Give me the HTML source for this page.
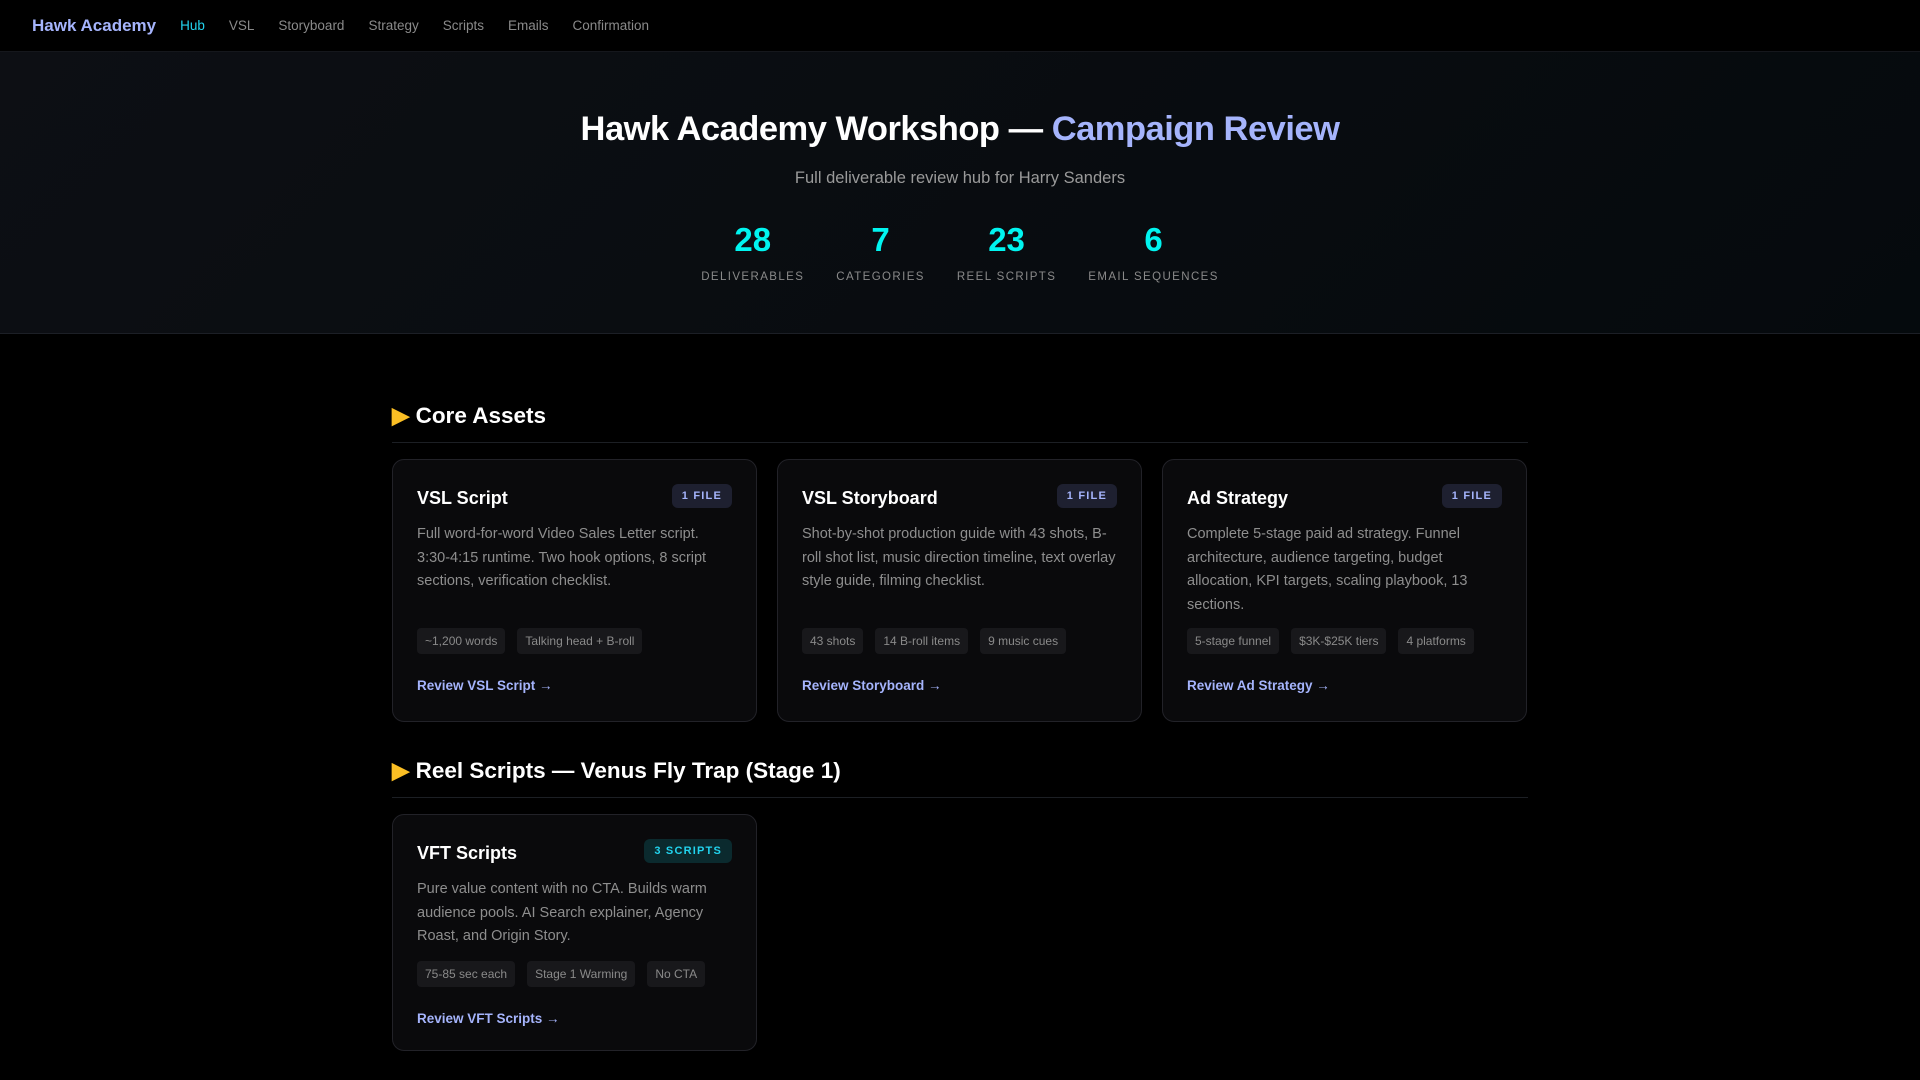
<!DOCTYPE html>
<html><head><meta charset="utf-8"><style>
*{margin:0;padding:0;box-sizing:border-box}
body{width:1920px;height:1080px;background:#000;font-family:"Liberation Sans",sans-serif;color:#fff;overflow:hidden}
nav{height:52px;border-bottom:1px solid #15171c;display:flex;align-items:center;padding-left:32px}
.logo{font-size:17px;font-weight:bold;color:#a5b4fc;margin-right:24px}
nav a{font-size:13.5px;color:#8a8a8a;margin-right:24px;text-decoration:none}
nav a.on{color:#22d3ee}
.hero{height:282px;background:linear-gradient(135deg,#0d0f14,#050a0d);border-bottom:1px solid #1c1f26;text-align:center;padding-top:58px}
.hero h1{font-size:34.5px;font-weight:bold;letter-spacing:-0.5px}
.hero h1 span{color:#a5b4fc}
.sub{color:#9a9a9a;font-size:16.5px;margin-top:20px}
.stats{display:flex;justify-content:center;gap:32px;margin-top:33px}
.stat{text-align:center}
.stat b{display:block;font-size:33px;color:#00f5f0}
.stat small{display:block;font-size:11.5px;letter-spacing:1.4px;color:#8a8a8a;margin-top:12px}
.wrap{width:1136px;margin-left:392px}
h2{font-size:22.5px;font-weight:bold;padding-bottom:13px;border-bottom:1px solid #1c1f24;margin-bottom:16px}
h2 i{font-style:normal;color:#fbbf24}
.grid{display:flex;gap:20px}
.card{width:365px;background:#0a0a0c;border:1px solid #222228;border-radius:12px;padding:24px 24px 28px;position:relative}
.card h3{font-size:18px;margin-top:4px}
.badge{position:absolute;right:24px;top:24px;background:#1e2030;color:#a5b4fc;font-size:11px;font-weight:bold;letter-spacing:1.2px;padding:6px 10px;border-radius:6px}
.badge.c{background:#0b2a2e;color:#22d3ee}
.card p{color:#8e8e8e;font-size:14.5px;line-height:23.5px;margin-top:14px;height:105px}
.tags{display:flex;gap:12px}
.tags span{background:#18181b;color:#8a8a8a;font-size:12px;padding:6px 8px;border-radius:4px}
.link{display:block;color:#a5b4fc;font-size:13.5px;font-weight:bold;margin-top:24px}
</style></head><body>
<nav><span class="logo">Hawk Academy</span><a class="on">Hub</a><a>VSL</a><a>Storyboard</a><a>Strategy</a><a>Scripts</a><a>Emails</a><a>Confirmation</a></nav>
<div class="hero">
<h1>Hawk Academy Workshop — <span>Campaign Review</span></h1>
<div class="sub">Full deliverable review hub for Harry Sanders</div>
<div class="stats">
<div class="stat"><b>28</b><small>DELIVERABLES</small></div>
<div class="stat"><b>7</b><small>CATEGORIES</small></div>
<div class="stat"><b>23</b><small>REEL SCRIPTS</small></div>
<div class="stat"><b>6</b><small>EMAIL SEQUENCES</small></div>
</div></div>
<div class="wrap" style="margin-top:69px">
<h2><i>▶</i> Core Assets</h2>
<div class="grid">
<div class="card"><h3>VSL Script</h3><span class="badge">1 FILE</span><p>Full word-for-word Video Sales Letter script. 3:30-4:15 runtime. Two hook options, 8 script sections, verification checklist.</p><div class="tags"><span>~1,200 words</span><span>Talking head + B-roll</span></div><a class="link">Review VSL Script →</a></div>
<div class="card"><h3>VSL Storyboard</h3><span class="badge">1 FILE</span><p>Shot-by-shot production guide with 43 shots, B-roll shot list, music direction timeline, text overlay style guide, filming checklist.</p><div class="tags"><span>43 shots</span><span>14 B-roll items</span><span>9 music cues</span></div><a class="link">Review Storyboard →</a></div>
<div class="card"><h3>Ad Strategy</h3><span class="badge">1 FILE</span><p>Complete 5-stage paid ad strategy. Funnel architecture, audience targeting, budget allocation, KPI targets, scaling playbook, 13 sections.</p><div class="tags"><span>5-stage funnel</span><span>$3K-$25K tiers</span><span>4 platforms</span></div><a class="link">Review Ad Strategy →</a></div>
</div>
<h2 style="margin-top:36px"><i>▶</i> Reel Scripts — Venus Fly Trap (Stage 1)</h2>
<div class="grid">
<div class="card" style="height:237px"><h3>VFT Scripts</h3><span class="badge c">3 SCRIPTS</span><p style="height:auto">Pure value content with no CTA. Builds warm audience pools. AI Search explainer, Agency Roast, and Origin Story.</p><div class="tags" style="margin-top:12px"><span>75-85 sec each</span><span>Stage 1 Warming</span><span>No CTA</span></div><a class="link">Review VFT Scripts →</a></div>
</div></div>
</body></html>
